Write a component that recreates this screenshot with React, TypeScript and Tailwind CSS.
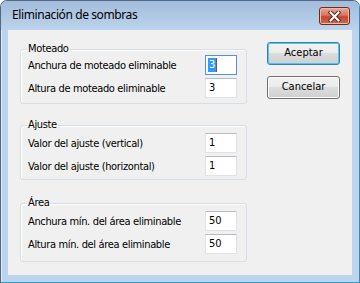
const body = { fontFamily: '"DejaVu Sans Condensed", "Liberation Sans", sans-serif' };

function Field({ value, focused }: { value: string; focused?: boolean }) {
  return (
    <div
      className={
        'w-[32px] h-[20px] bg-white flex items-center pl-[2px] text-[11px] text-black tracking-normal border ' +
        (focused
          ? 'border-[#5593d0]'
          : 'border-[#dfe3e8] border-t-[#b7bcc4]')
      }
    >
      {focused ? (
        <>
          <span className="bg-[#3399ff] text-white leading-[14px] px-[1px]">{value}</span>
          <span className="w-[1px] h-[14px] bg-[#9a4a14]" />
        </>
      ) : (
        <span className="px-[1px]">{value}</span>
      )}
    </div>
  );
}

function Row({ label, value, focused }: { label: string; value: string; focused?: boolean }) {
  return (
    <div className="flex items-center justify-between h-[20px]">
      <span className="pt-[2px]">{label}</span>
      <Field value={value} focused={focused} />
    </div>
  );
}

function Group({ title, className, children }: { title: string; className: string; children: React.ReactNode }) {
  return (
    <fieldset
      className={
        'border border-[#d5dfe5] rounded-[3px] shadow-[inset_1px_1px_0_#ffffff] pl-[7px] pr-[9px] flex flex-col gap-[3px] ' +
        className
      }
    >
      <legend className="-ml-[1px] px-[1px] leading-[12px]">{title}</legend>
      {children}
    </fieldset>
  );
}

function Button({ label, primary }: { label: string; primary?: boolean }) {
  return (
    <button
      className={
        'w-[73px] h-[23px] rounded-[3px] border text-[11px] text-black bg-[linear-gradient(#f2f2f2_0%,#ebebeb_50%,#dddddd_50%,#cfcfcf_100%)] ' +
        (primary
          ? 'border-[#3c7fb1] shadow-[inset_0_0_0_1px_#48c9f0]'
          : 'border-[#707070] shadow-[inset_0_0_0_1px_#fbfbfb]')
      }
    >
      {label}
    </button>
  );
}

export default function App() {
  return (
    <div className="w-[360px] h-[283px] bg-white">
      <div className="h-full flex flex-col rounded-t-[7px] border border-[#4f6a86] border-b-[#2f9ccc] border-r-[#3a8bb8] bg-[#bdd4ec] shadow-[inset_1px_1px_0_#dfeaf6]">
        {/* Title bar */}
        <div className="h-[29px] flex items-center justify-between pl-[11px] pr-[9px] rounded-t-[6px] bg-[linear-gradient(#a2bcdb,#bcd3ec)]">
          <span className="text-[12px] tracking-[-0.4px] text-black pb-[1px]" style={{ fontFamily: '"Noto Sans", "Open Sans", sans-serif' }}>
            Eliminación de sombras
          </span>
          <div className="mt-[1px] w-[31px] h-[18px] rounded-[3px] border border-[#6e2a1e] bg-[linear-gradient(#e9a996_0%,#d6775f_45%,#c2482f_55%,#cf6a4c_100%)] shadow-[inset_0_0_0_1px_#eeb9a8] flex items-center justify-center">
            <svg width="13" height="11" viewBox="0 0 13 11">
              <path d="M2.5 1.5 L10.5 9.5 M10.5 1.5 L2.5 9.5" stroke="#5a2a22" strokeWidth="4" strokeLinecap="square" />
              <path d="M2.5 1.5 L10.5 9.5 M10.5 1.5 L2.5 9.5" stroke="#ffffff" strokeWidth="2" strokeLinecap="square" />
            </svg>
          </div>
        </div>

        {/* Client area */}
        <div className="flex-1 px-[7px] pb-[7px]">
          <div className="h-full bg-[#f0f0f0] flex pl-[12px] text-[11px] tracking-[-0.35px] text-black" style={body}>
            <div className="w-[227px] flex flex-col pt-[13px]">
              <Group title="Moteado" className="pb-[5px]">
                <Row label="Anchura de moteado eliminable" value="3" focused />
                <Row label="Altura de moteado eliminable" value="3" />
              </Group>
              <Group title="Ajuste" className="mt-[15px] pt-[2px] pb-[3px]">
                <Row label="Valor del ajuste (vertical)" value="1" />
                <Row label="Valor del ajuste (horizontal)" value="1" />
              </Group>
              <Group title="Área" className="mt-[17px] pt-[2px] pb-[7px]">
                <Row label="Anchura mín. del área eliminable" value="50" />
                <Row label="Altura mín. del área eliminable" value="50" />
              </Group>
            </div>
            <div className="ml-[20px] flex flex-col gap-[11px] pt-[12px] tracking-normal">
              <Button label="Aceptar" primary />
              <Button label="Cancelar" />
            </div>
          </div>
        </div>
      </div>
    </div>
  );
}
